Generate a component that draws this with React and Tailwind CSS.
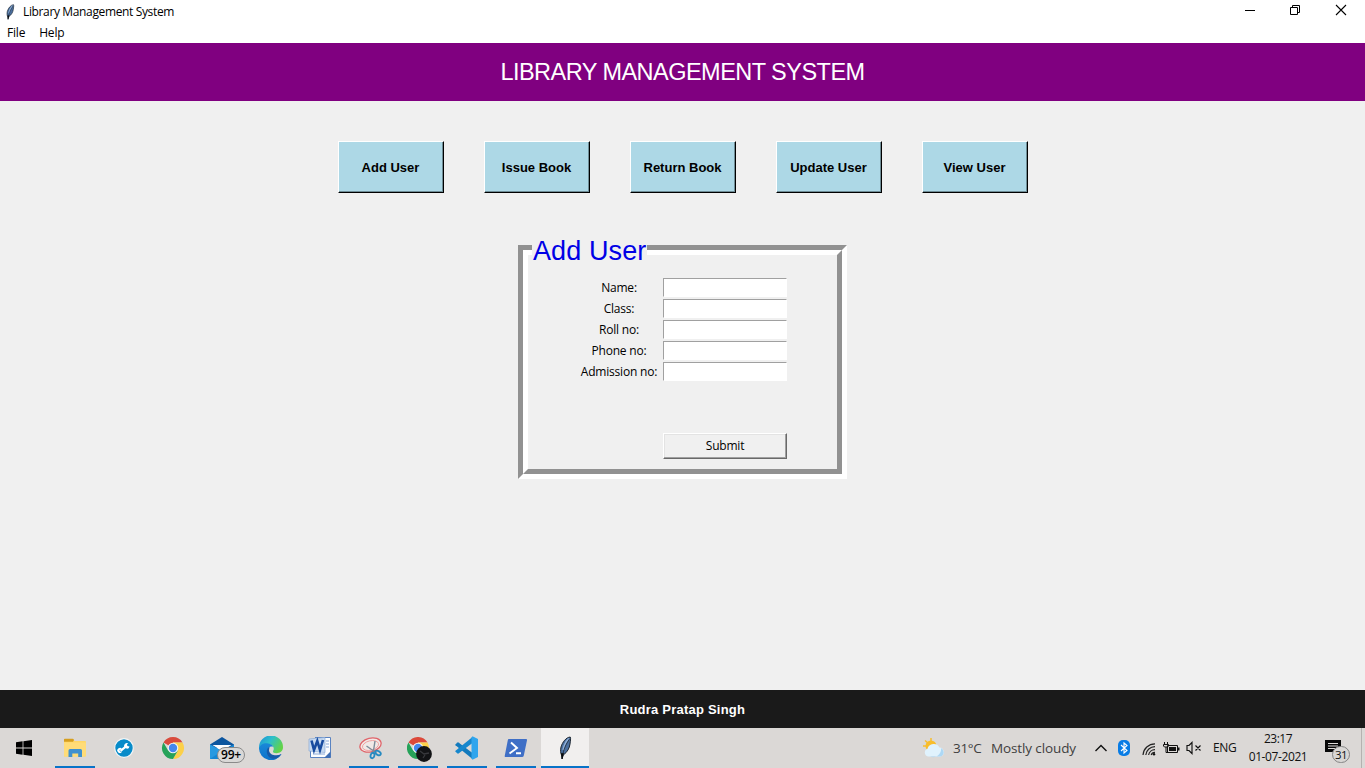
import React from "react";

const ui = "font-['Open_Sans','Noto_Sans',sans-serif]";
const arial = "font-['Liberation_Sans',sans-serif]";

function Feather({ className }) {
  return (
    <svg viewBox="0 0 14 24" className={className}>
      <path d="M12.2 1C8 1.500 4.500 6 3 11C2.300 14 2.500 17 3.500 19L4 23L5.300 19C9.500 16 11.500 12 12 8C12.300 5 13 2.500 12.200 1Z" fill="#4a6f9f" stroke="#1b2530" strokeWidth="1" />
      <path d="M10.800 2.500C8.500 5 6.200 9 5.200 14" fill="none" stroke="#8fb0da" strokeWidth="1.800" />
      <path d="M11.500 3C8 8 5.500 13 4.400 21" fill="none" stroke="#101418" strokeWidth="0.700" />
      <path d="M2.800 17.300L6 17.300L4.900 20L4.600 23H3.800L3.600 20Z" fill="#080808" />
    </svg>
  );
}

function Windows() {
  return (
    <svg viewBox="0 0 16 16" className="h-4 w-4" fill="#000">
      <path d="M0 2.200L6.600 1.300V7.500H0ZM7.400 1.200L16 0V7.500H7.400ZM0 8.400H6.600V14.700L0 13.800ZM7.400 8.400H16V16L7.400 14.800Z" />
    </svg>
  );
}

function Explorer() {
  return (
    <svg viewBox="0 0 22 20" className="h-5 w-[22px]">
      <path d="M0 1.500Q0 1 .6 1H9L10.500 3H21Q22 3 22 4V17.500Q22 18.500 21 18.500H0Z" fill="#ffd766" />
      <path d="M0 1.500Q0 .8 .8 .8H8.600Q9.500 .8 10 2L9 3.800H0Z" fill="#d69e1f" />
      <path d="M0 4.500H22V17.500Q22 18.500 21 18.500H1Q0 18.500 0 17.500Z" fill="#ffdc78" />
      <path d="M4.500 19V12.500Q4.500 11 6 11H16.500Q18 11 18 12.500V19H14.200V15.500H8.300V19Z" fill="#3f91d0" />
    </svg>
  );
}

function Wrench() {
  return (
    <svg viewBox="0 0 20 20" className="h-5 w-5">
      <circle cx="10" cy="10" r="9.300" fill="#078bc9" stroke="#f3f5f6" strokeWidth="1.200" />
      <path d="M6.500 12.800L13 7.700" stroke="#fff" strokeWidth="2.200" />
      <path d="M8 11.200A2.500 2.500 0 1 0 8 13.800L6 13.600L5.500 12.100Z" fill="#fff" />
      <path d="M15.500 8.400A2.700 2.700 0 1 1 14.400 5.600L12.900 6.600L13.400 8.100Z" fill="#fff" />
    </svg>
  );
}

function Chrome({ className }) {
  return (
    <svg viewBox="0 0 24 24" className={className}>
      <path d="M12 12L2.470 6.500A11 11 0 0 1 21.530 6.500L21.530 6.500H12Z" fill="#d94b3d" />
      <path d="M12 12L12 6.500H21.530A11 11 0 0 1 12 23L16.760 14.750Z" fill="#fcd049" />
      <path d="M12 12L16.760 14.750L12 23A11 11 0 0 1 2.470 6.500L7.240 14.750Z" fill="#26a259" />
      <circle cx="12" cy="12" r="5.300" fill="#f4f4f4" />
      <circle cx="12" cy="12" r="4.200" fill="#4487ee" />
    </svg>
  );
}

function Mail() {
  return (
    <svg viewBox="0 0 24 24" className="h-6 w-6">
      <path d="M0 8.500L12 1L24 8.500V12H0Z" fill="#0b559f" />
      <path d="M2.500 9H21.500L12 15Z" fill="#fafcff" />
      <path d="M0 8.500L12 15L24 8.500V23H0Z" fill="#1686d3" />
      <path d="M0 8.500L12 15L0 23Z" fill="#2899e0" />
    </svg>
  );
}

function Edge() {
  return (
    <svg viewBox="0 0 24 24" className="h-6 w-6">
      <defs>
        <linearGradient id="edgeTop" x1="0" y1="0" x2="1" y2=".5">
          <stop offset="0" stopColor="#1c8ed8" />
          <stop offset=".5" stopColor="#2dbfca" />
          <stop offset="1" stopColor="#62d34a" />
        </linearGradient>
        <linearGradient id="edgeBody" x1="0" y1="0" x2="0" y2="1">
          <stop offset="0" stopColor="#1988d8" />
          <stop offset="1" stopColor="#0c72ca" />
        </linearGradient>
      </defs>
      <path d="M0 11.500A12 12 0 0 1 24 11.300C24 15.500 20.500 17.200 17.500 17.200C14.300 17.200 13.500 16 14.200 14.800C16 12 13.500 8 9 8C4.500 8 1 10 0 14Z" fill="url(#edgeTop)" />
      <path d="M0 12.500C1 8.600 4.500 7 8 7.300C11.500 7.500 13.500 9 14.300 10.800C10 9.500 7.800 13 9 16.500C10.500 20.800 17 22 22.500 18A12 12 0 0 1 0 12.500Z" fill="url(#edgeBody)" />
      <path d="M10.500 10.700C6 13 7.300 20.500 12.500 22.500C16.500 23.700 20 21.800 22.500 18C17.500 20.500 11 19.500 10 14.500Z" fill="#155aa8" />
    </svg>
  );
}

function Word() {
  return (
    <svg viewBox="0 0 24 24" className="h-6 w-6">
      <path d="M7 1.500H22.500V21.500H2.500V14" fill="#fbfdff" stroke="#5a83c1" />
      <path d="M18 5H21M18 8H21M18 11H21M5 18H17" stroke="#89a9d8" />
      <path d="M1 3L17 1.500V16.500L1 15Z" fill="#c7daf1" stroke="#8aa9d6" strokeWidth=".7" />
      <path d="M3.500 4.500L6 14L9.300 5L12 14L15 4" fill="none" stroke="#174b9f" strokeWidth="2.600" />
      <path d="M16 22L22.500 15.500V22Z" fill="#3e6eb4" />
    </svg>
  );
}

function Snip() {
  return (
    <svg viewBox="0 0 24 24" className="ml-px h-6 w-6" fill="none">
      <ellipse cx="12.500" cy="9" rx="10.800" ry="6.800" transform="rotate(-14 12.500 9)" fill="#f1e9e7" stroke="#e0646a" strokeWidth="1.300" />
      <ellipse cx="12.500" cy="9.500" rx="8.200" ry="4.700" transform="rotate(-14 12.500 9.500)" stroke="#ee9697" strokeWidth=".8" />
      <path d="M8.500 10L18.500 17M17 5L15 18" stroke="#7d8b98" strokeWidth="1.400" />
      <ellipse cx="14.500" cy="19.500" rx="1.900" ry="2.800" transform="rotate(15 14.500 19.500)" stroke="#278ac1" strokeWidth="1.800" />
      <ellipse cx="20" cy="17" rx="3" ry="1.900" transform="rotate(30 20 17)" stroke="#278ac1" strokeWidth="1.800" />
    </svg>
  );
}

function ChromeProfile() {
  return (
    <svg viewBox="0 0 26 26" className="ml-[4px] mt-[3px] h-[26px] w-[26px]">
      <path d="M11 11L1.470 5.500A11 11 0 0 1 20.530 5.500H11Z" fill="#dc493a" />
      <path d="M11 5.500H20.530A11 11 0 0 1 11 22L15.760 13.750Z" fill="#fcd049" />
      <path d="M11 11L15.760 13.750L11 22A11 11 0 0 1 1.470 5.500L6.240 13.750Z" fill="#26a259" />
      <circle cx="11" cy="11" r="5.300" fill="#f4f4f4" />
      <circle cx="11" cy="11" r="4.200" fill="#4487ee" />
      <circle cx="17" cy="17" r="7.900" fill="#121315" />
      <path d="M13 14L17 17L22 16M16 21L18 18" stroke="#38393d" strokeWidth="1.300" fill="none" />
    </svg>
  );
}

function VsCode() {
  return (
    <svg viewBox="0 0 24 24" className="h-6 w-6">
      <path d="M.5 8.200L2.500 6.500Q3 6.200 3.500 6.500L17.500 17V23L.5 9.300Q0 8.700 .5 8.200Z" fill="#137abd" />
      <path d="M.5 15.800L2.500 17.500Q3 17.800 3.500 17.500L17.500 7V1L.5 14.700Q0 15.300 .5 15.800Z" fill="#1687cd" />
      <path d="M17.500 .3L23 3V21L17.500 23.700L16.500 22.500V1.500Z" fill="#30a5ed" />
    </svg>
  );
}

function PowerShell() {
  return (
    <svg viewBox="0 0 24 20" className="h-5 w-6">
      <path d="M4.800 1H22Q23.400 1 23 2.300L19.800 17.500Q19.500 19 18 19H1.600Q.4 19 .8 17.500L3.800 2.300Q4 1 4.800 1Z" fill="#3f6fc6" />
      <path d="M7 4.500L13 10L5.500 15.500M12 15.300H17" stroke="#fff" strokeWidth="1.900" fill="none" />
    </svg>
  );
}

const apps = [
  { id: "explorer", icon: <Explorer />, open: true },
  { id: "tool", icon: <Wrench /> },
  { id: "chrome", icon: <Chrome className="h-6 w-6" /> },
  { id: "mail", icon: <Mail />, badge: "99+" },
  { id: "edge", icon: <Edge /> },
  { id: "word", icon: <Word /> },
  { id: "snip", icon: <Snip />, open: true },
  { id: "chrome-profile", icon: <ChromeProfile />, open: true },
  { id: "code", icon: <VsCode />, open: true },
  { id: "powershell", icon: <PowerShell />, open: true },
  { id: "tk", icon: <Feather className="h-6 w-[14px]" />, active: true },
];

function TaskButton({ app }) {
  return (
    <div className={`relative flex h-10 w-12 flex-col items-center ${app.active ? "bg-[#f1efee]" : ""}`}>
      <div className="flex h-[38px] items-center pt-0.5">{app.icon}</div>
      {app.open && <div className="h-0.5 w-10 bg-[#0873c8]" />}
      {app.active && <div className="h-0.5 w-12 bg-[#0873c8]" />}
      {app.badge && (
        <div className="absolute left-[19px] top-[19px] flex h-4 w-7 items-center justify-center rounded-full border border-[#8a8a8a] bg-[#d9d8d7] text-[12px] font-semibold tracking-[-0.2px] text-black">
          {app.badge}
        </div>
      )}
    </div>
  );
}

function Tray() {
  return (
    <div className="flex h-10 items-center text-[12px] text-[#111]">
      <svg viewBox="0 0 24 20" className="h-5 w-6">
        <circle cx="9" cy="8" r="5.500" fill="#f8bd2c" />
        <path d="M9 0V3M1 8H4M3 2.500L5.300 4.500" stroke="#f8bd2c" strokeWidth="1.500" />
        <path d="M6 18.500A4 4 0 0 1 5.500 10.800A6.500 6.500 0 0 1 17.500 9.500A4.600 4.600 0 0 1 18.500 18.500Z" fill="#e0f2fd" />
        <path d="M8 18.500A8 8 0 0 0 19 10A4.600 4.600 0 0 1 18.500 18.500Z" fill="#add8f5" />
      </svg>
      <div className="ml-[7px] w-[38px] whitespace-nowrap pt-px text-[13.500px] tracking-[-0.3px] text-[#3f3f3f]">31°C</div>
      <div className="w-[103px] whitespace-nowrap pt-px text-[13.500px] tracking-[-0.120px] text-[#3f3f3f]">Mostly cloudy</div>
      <svg viewBox="0 0 14 8" className="h-2 w-[14px]"><path d="M1.500 7L7 1.500L12.500 7" fill="none" stroke="#111" strokeWidth="1.400" /></svg>
      <svg viewBox="0 0 12 16" className="ml-[10px] mr-px h-4 w-3">
        <rect width="12" height="16" rx="5" fill="#087ce5" />
        <path d="M3 5L9 10.500L6 13V3L9 5.500L3 11" fill="none" stroke="#fff" strokeWidth="1.100" />
      </svg>
      <svg viewBox="0 0 14 14" className="ml-[11px] mr-px mt-0.5 h-[14px] w-[14px]" fill="none" stroke="#222" strokeWidth="1.200">
        <path d="M1 13A12 12 0 0 1 13 1.800M3.800 13A9.200 9.200 0 0 1 13 4.700M6.600 13A6.400 6.400 0 0 1 13 7.600M9.200 13A3.800 3.800 0 0 1 13 10.300" />
        <circle cx="12" cy="12.300" r="1.200" fill="#111" stroke="none" />
      </svg>
      <svg viewBox="0 0 17 12" className="ml-[6px] h-3 w-[17px]">
        <path d="M4.500 3.500H14.500V10.500H4.500Z" fill="none" stroke="#111" />
        <path d="M6 5H13V9H6ZM15 5.500H16.500V8.500H15Z" fill="#111" />
        <path d="M1.500 0V2M4.500 0V2M.5 2.500H5.500V4L4.500 5H1.500L.5 4ZM3 5V10.500H5" fill="none" stroke="#111" />
      </svg>
      <svg viewBox="0 0 16 14" className="ml-[6px] h-[14px] w-4" fill="none" stroke="#111">
        <path d="M1 4.500H3L6 1.500V12.500L3 9.500H1ZM9.500 4.500L14.500 9.500M14.500 4.500L9.500 9.500" strokeWidth="1.150" />
      </svg>
      <div className="ml-[11px] w-6 tracking-[-0.3px]">ENG</div>
      <div className="ml-2 flex h-10 w-[66px] flex-col items-center pt-0.5 leading-[18px]">
        <span className="tracking-[-0.5px]">23:17</span>
        <span className="whitespace-nowrap tracking-[-0.4px]">01-07-2021</span>
      </div>
      <div className="relative ml-[14px] h-10 w-[36px]">
        <svg viewBox="0 0 16 16" className="mt-[12px] h-4 w-4">
          <path d="M0 0H16V12H13V15.500L9.500 12H0Z" fill="#080808" />
          <path d="M3 3.500H13M3 6H13M3 8.500H10" stroke="#dddad8" />
        </svg>
        <div className="absolute left-[7px] top-[18px] flex h-[17px] w-[18px] items-center justify-center rounded-full border border-[#858585] bg-[#d8d6d4] text-[11.500px] tracking-[-0.5px]">31</div>
      </div>
      <div className="h-10 w-[4px] border-l border-[#b5b2b0]" />
    </div>
  );
}

const actions = ["Add User", "Issue Book", "Return Book", "Update User", "View User"];
const fields = ["Name:", "Class:", "Roll no:", "Phone no:", "Admission no:"];

export default function App() {
  return (
    <div className={`flex h-[768px] w-[1365px] flex-col overflow-hidden bg-[#f0f0f0] text-black ${ui}`}>
      <header className="flex h-6 items-center justify-between bg-white pl-1 text-[12px]">
        <div className="flex items-center">
          <Feather className="-mt-px h-4 w-3" />
          <h1 className="ml-[7px] tracking-[-0.360px]">Library Management System</h1>
        </div>
        <div className="flex h-5 items-center gap-[33px] pb-[3px] pr-[18px]">
          <svg viewBox="0 0 12 12" className="h-3 w-3"><path d="M1 5.500H11" stroke="#000" /></svg>
          <svg viewBox="0 0 12 12" className="h-3 w-3" fill="none" stroke="#000"><path d="M1.500 2.500H8.500V9.500H1.500ZM3.500 2.500V.5H10.500V7.500H8.500" /></svg>
          <svg viewBox="0 0 12 12" className="-mt-px ml-px h-3 w-3"><path d="M1 1L11 11M11 1L1 11" stroke="#000" strokeWidth="1.100" /></svg>
        </div>
      </header>
      <nav className="flex h-[19px] items-center gap-[14px] bg-white pb-[2px] pl-[7px] text-[12px] tracking-[-0.2px]">
        <span>File</span>
        <span>Help</span>
      </nav>
      <div className={`flex h-[58px] items-center justify-center bg-[#800080] pt-[2px] text-[23.500px] tracking-[-0.530px] text-white ${arial}`}>
        LIBRARY MANAGEMENT SYSTEM
      </div>

      <main className="flex flex-1 flex-col items-center pt-10">
        <div className="flex gap-10">
          {actions.map((a) => (
            <button key={a} className={`h-[52px] w-[106px] border border-b-black border-l-white border-r-black border-t-white bg-[#add8e6] pt-[2px] text-[13px] font-bold shadow-[inset_-1px_-1px_0_#6f8d96] ${arial}`}>
              {a}
            </button>
          ))}
        </div>

        <section className="relative mt-[52px] h-[234px] w-[329px] border-[5px] border-b-white border-l-[#919191] border-r-white border-t-[#919191]">
          <div className="h-full border-[5px] border-b-[#919191] border-l-white border-r-[#919191] border-t-white pl-[50px] pt-[23px]">
            <div className="flex flex-col gap-px">
              {fields.map((f) => (
                <label key={f} className="flex h-5 items-center gap-[3px] text-[12px]">
                  <span className="w-[82px] whitespace-nowrap text-center tracking-[-0.2px]">{f}</span>
                  <input className="h-[19px] w-[124px] self-start border border-b-white border-l-[#a0a0a0] border-r-white border-t-[#a0a0a0] bg-white outline-none" />
                </label>
              ))}
            </div>
            <button className="ml-[85px] mt-[51px] block h-[26px] w-[124px] border border-b-[#696969] border-l-white border-r-[#696969] border-t-white text-[12px] tracking-[-0.2px] shadow-[inset_-1px_-1px_0_#a0a0a0,inset_1px_1px_0_#e3e3e3]">
              Submit
            </button>
          </div>
          <h2 className={`absolute left-[9px] top-[-16px] h-8 w-[115px] whitespace-nowrap bg-[#f0f0f0] pl-px text-[27px] leading-[34px] tracking-[0.100px] text-[#0000e6] ${arial}`}>Add User</h2>
        </section>
      </main>

      <footer className={`flex h-[38px] items-center justify-center bg-[#1a1a1a] pt-[2px] text-[13px] font-bold tracking-[0.220px] text-white ${arial}`}>
        Rudra Pratap Singh
      </footer>
      <div className="flex h-10 items-center justify-between bg-[#dbd8d6]">
        <div className="flex">
          <div className="mr-[3px] flex h-10 w-12 items-center justify-center"><Windows /></div>
          <div className="flex gap-px">
            {apps.map((app) => <TaskButton key={app.id} app={app} />)}
          </div>
        </div>
        <Tray />
      </div>
    </div>
  );
}
